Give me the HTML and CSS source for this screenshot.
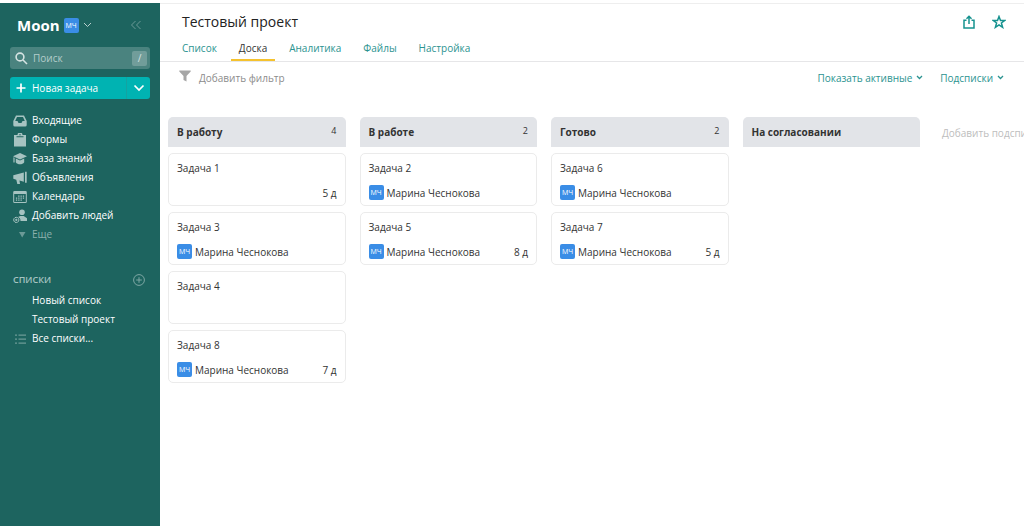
FILE: index.html
```html
<!DOCTYPE html>
<html lang="ru">
<head>
<meta charset="utf-8">
<title>Тестовый проект</title>
<link rel="stylesheet" href="styles.css">
</head>
<body>
<div class="app">
  <aside class="sidebar">
    <div class="account">
      <button class="workspace" type="button">
        <span class="workspace-name">Moon</span>
        <span class="avatar">МЧ</span>
        <svg class="chevron" width="9" height="6" viewBox="0 0 9 6"><path d="M1 1l3.500 3.500L8 1"/></svg>
      </button>
      <button class="collapse" type="button" aria-label="Свернуть">
        <svg width="12" height="10" viewBox="0 0 12 10"><path d="M5.500 1l-4 4 4 4M10.500 1l-4 4 4 4"/></svg>
      </button>
    </div>
    <div class="search">
      <svg width="13" height="13" viewBox="0 0 13 13"><circle cx="5" cy="5" r="3.900"/><path d="M8 8l4 4"/></svg>
      <input class="search-input" type="text" placeholder="Поиск" aria-label="Поиск">
      <span class="key">/</span>
    </div>
    <div class="create">
      <button class="create-main" type="button">
        <svg width="10" height="10" viewBox="0 0 10 10"><path d="M5 .5v9M.5 5h9"/></svg>
        Новая задача
      </button>
      <button class="create-more" type="button" aria-label="Другие варианты">
        <svg width="12" height="8" viewBox="0 0 12 8"><path d="M1.500 1.500L6 6l4.500-4.500"/></svg>
      </button>
    </div>
    <nav class="nav">
      <a class="nav-item" href="#"><svg class="icon" viewBox="0 0 14 14"><path fill-rule="evenodd" d="M3 1.500h8l2.700 5.500V11a1.500 1.500 0 0 1-1.500 1.500H1.800A1.500 1.500 0 0 1 .3 11V7zM4 3L2.200 7h2.300l1 2h3l1-2h2.300L10 3z"/></svg>Входящие</a>
      <a class="nav-item" href="#"><svg class="icon" viewBox="0 0 14 14"><path fill-rule="evenodd" d="M1 2h3.500a2.500 2.500 0 0 1 5 0H13v11.500H1zM3.500 3.200v1h7v-1zM6.300 1.800a.7.700 0 1 0 1.400 0 .7.700 0 0 0-1.400 0z"/></svg>Формы</a>
      <a class="nav-item" href="#"><svg class="icon" viewBox="0 0 14 14"><path d="M7 1l7 3.200-7 3.200-7-3.200zM2.800 6.400L7 8.400l4.200-2v3.800C9.500 13 4.500 13 2.800 10.200zM.4 5.200l1.200.5v4.800H.4z"/></svg>База знаний</a>
      <a class="nav-item" href="#"><svg class="icon" viewBox="0 0 14 14"><path d="M.3 4.300L10.800 1.500v9.200L6.500 9.600 7 13H4.300L3.300 8.700l-3-.9zM12 .8h1.700v11H12z"/></svg>Объявления</a>
      <a class="nav-item" href="#"><svg class="icon" viewBox="0 0 14 14"><path fill-rule="evenodd" d="M1.500 1h11A1.300 1.300 0 0 1 13.800 2.300v9.400a1.300 1.300 0 0 1-1.300 1.300h-11A1.300 1.300 0 0 1 .2 11.700V2.300A1.300 1.300 0 0 1 1.500 1zM1.200 4v8h11.600V4z"/><path d="M5.200 5.500h1.300v1.200H5.200zM7.500 5.500h1.300v1.200H7.500zM9.800 5.500h1.300v1.200H9.800zM2.900 7.500h1.300v1.200H2.900zM5.200 7.500h1.300v1.200H5.200zM7.500 7.500h1.300v1.200H7.500zM9.800 7.500h1.300v1.200H9.800zM2.900 9.500h1.300v1.200H2.900zM5.200 9.500h1.300v1.200H5.200zM7.500 9.500h1.300v1.200H7.500z"/></svg>Календарь</a>
      <a class="nav-item" href="#"><svg class="icon" viewBox="0 0 14 14"><circle cx="9" cy="3.300" r="2.800"/><path d="M7.300 7h3.400l3.300 2.300V12H7.500A4 4 0 0 0 5 8z"/><path class="ring" d="M3.300 8.300a2.600 2.600 0 1 0 .01 0zM3.300 9.700v2.400M2.100 10.900h2.400"/></svg>Добавить людей</a>
      <a class="nav-item nav-more" href="#"><svg class="icon" viewBox="0 0 14 14"><path d="M6 4h6.500L9.200 9.500z"/></svg>Еще</a>
    </nav>
    <div class="lists-head">
      <span>СПИСКИ</span>
      <button class="add-list" type="button" aria-label="Добавить список">
        <svg width="12" height="12" viewBox="0 0 12 12"><circle cx="6" cy="6" r="5.400"/><path d="M6 3.200v5.600M3.200 6h5.600"/></svg>
      </button>
    </div>
    <nav class="lists">
      <a class="nav-item" href="#"><span class="icon"></span>Новый список</a>
      <a class="nav-item" href="#"><span class="icon"></span>Тестовый проект</a>
      <a class="nav-item" href="#"><svg class="icon icon-dim" viewBox="0 0 14 14"><path d="M2 2.500h2v1.200H2zM2 6.500h2v1.200H2zM2 10.500h2v1.200H2zM5.500 2.500H13v1.200H5.500zM5.500 6.500H13v1.200H5.500zM5.500 10.500H13v1.200H5.500z"/></svg>Все списки...</a>
    </nav>
  </aside>
  <main class="main">
    <header class="header">
      <div class="title-row">
        <h1 class="title">Тестовый проект</h1>
        <div class="actions">
          <button type="button" aria-label="Поделиться"><svg width="12" height="14" viewBox="0 0 12 14"><path d="M3.500 5.200H1v7.800h10V5.200H8.500M6 9V1.500M3.500 3.800L6 1.300l2.500 2.500"/></svg></button>
          <button type="button" aria-label="В избранное"><svg width="14" height="14" viewBox="0 0 14 14"><path d="M7 1.500l1.500 4h4.200L9.400 8l1.200 4.300L7 9.800l-3.600 2.500L4.600 8 1.300 5.500h4.200z"/></svg></button>
        </div>
      </div>
      <nav class="tabs">
        <a class="tab" href="#">Список</a>
        <a class="tab tab-active" href="#">Доска</a>
        <a class="tab" href="#">Аналитика</a>
        <a class="tab" href="#">Файлы</a>
        <a class="tab" href="#">Настройка</a>
      </nav>
    </header>
    <div class="toolbar">
      <button class="filter" type="button">
        <svg width="12" height="15" viewBox="0 0 12 15"><path d="M.3.500h11.400v1L7.500 6v5.500L4.500 10V6L.3 1.500z"/></svg>
        Добавить фильтр
      </button>
      <div class="views">
        <button class="view" type="button">Показать активные <svg width="7" height="5" viewBox="0 0 7 5"><path d="M1 1l2.500 2.500L6 1"/></svg></button>
        <button class="view" type="button">Подсписки <svg width="7" height="5" viewBox="0 0 7 5"><path d="M1 1l2.500 2.500L6 1"/></svg></button>
      </div>
    </div>
    <div class="board">
      <section class="column">
        <h2 class="column-head">В работу <span class="count">4</span></h2>
        <article class="card"><div>Задача 1</div><div class="meta"><span class="days">5 д</span></div></article>
        <article class="card"><div>Задача 3</div><div class="meta"><span class="avatar">МЧ</span>Марина Чеснокова</div></article>
        <article class="card"><div>Задача 4</div><div class="meta"></div></article>
        <article class="card"><div>Задача 8</div><div class="meta"><span class="avatar">МЧ</span>Марина Чеснокова<span class="days">7 д</span></div></article>
      </section>
      <section class="column">
        <h2 class="column-head">В работе <span class="count">2</span></h2>
        <article class="card"><div>Задача 2</div><div class="meta"><span class="avatar">МЧ</span>Марина Чеснокова</div></article>
        <article class="card"><div>Задача 5</div><div class="meta"><span class="avatar">МЧ</span>Марина Чеснокова<span class="days">8 д</span></div></article>
      </section>
      <section class="column">
        <h2 class="column-head">Готово <span class="count">2</span></h2>
        <article class="card"><div>Задача 6</div><div class="meta"><span class="avatar">МЧ</span>Марина Чеснокова</div></article>
        <article class="card"><div>Задача 7</div><div class="meta"><span class="avatar">МЧ</span>Марина Чеснокова<span class="days">5 д</span></div></article>
      </section>
      <section class="column">
        <h2 class="column-head">На согласовании</h2>
      </section>
      <button class="add-column" type="button">Добавить подсписок</button>
    </div>
  </main>
</div>
</body>
</html>
```
FILE: styles.css
```css
* { box-sizing: border-box; }
body {
  margin: 0;
  font: 10px/16px "Open Sans", "Noto Sans", sans-serif;
  color: #333;
  background: #fff;
}
button, input {
  font: inherit;
  color: inherit;
  background: none;
  border: 0;
  padding: 0;
  margin: 0;
}
button { cursor: pointer; }
a { color: inherit; text-decoration: none; }
svg { display: block; flex: none; fill: none; stroke: currentColor; }

.app {
  display: flex;
  min-height: 100vh;
  padding-top: 3px;
}
.sidebar {
  flex: 0 0 160px;
  min-width: 0;
  padding: 12px 10px;
  background: #1d645f;
  color: #fff;
}
.account {
  display: flex;
  align-items: center;
  justify-content: space-between;
  height: 20px;
  padding: 0 8px 0 7px;
}
.workspace { display: flex; align-items: center; gap: 4px; }
.workspace-name { font-size: 15px; font-weight: 700; line-height: 20px; }
.chevron { color: #b9d0ce; }
.collapse { color: #6c9a97; }
.avatar {
  flex: none;
  width: 15px;
  height: 15px;
  border-radius: 2px;
  background: #3a8de6;
  color: #fff;
  font-size: 7px;
  font-weight: 500;
  line-height: 15px;
  text-align: center;
}
.search {
  display: flex;
  align-items: center;
  gap: 5px;
  height: 22px;
  margin-top: 12px;
  padding: 0 3px 0 5px;
  border-radius: 3px;
  background: #4a837f;
  color: #d5e3e2;
}
.search svg { stroke-width: 1.6; }
.search-input { flex: 1; width: 100%; min-width: 0; outline: 0; }
.search-input::placeholder { color: #b4cdcb; opacity: 1; }
.key {
  flex: none;
  width: 15px;
  height: 15px;
  border-radius: 2px;
  background: #719d9a;
  line-height: 15px;
  text-align: center;
}
.create {
  display: flex;
  height: 22px;
  margin-top: 8px;
  border-radius: 3px;
  background: #00b3b2;
  font-weight: 500;
}
.create-main { flex: 1; display: flex; align-items: center; gap: 6px; padding-left: 6px; }
.create-more { width: 24px; display: grid; place-items: center; border-left: 1px solid #14a3a1; }
.create svg { stroke-width: 1.7; }

.nav { margin-top: 12px; }
.nav-item {
  display: flex;
  align-items: center;
  gap: 5px;
  padding-left: 3px;
  line-height: 19px;
  font-weight: 500;
}
.icon { width: 14px; height: 14px; fill: #a6c3c1; stroke: none; }
.icon-dim { fill: #6c9a97; }
.ring { fill: none; stroke: #a6c3c1; }
.nav-more { color: #8bb0ad; font-weight: 400; }
.nav-more .icon { fill: #6c9a97; }
.lists-head {
  display: flex;
  align-items: center;
  justify-content: space-between;
  margin-top: 26px;
  padding: 0 5px 0 3px;
  line-height: 19px;
  font-size: 9px;
  font-weight: 600;
  color: #a6c3c1;
}
.add-list { color: #7ea7a4; }
.lists { margin-top: 2px; }

.main { flex: 1; min-width: 0; overflow: hidden; border-top: 1px solid #eee; }
.header { padding: 8px 18px 0 14px; border-bottom: 1px solid #e6e6e8; }
.title-row { display: flex; align-items: center; justify-content: space-between; padding-left: 8px; }
.title { margin: 0; font-size: 14px; line-height: 20px; font-weight: 400; color: #222; }
.actions { display: flex; align-items: center; gap: 17px; color: #16928f; }
.actions svg { stroke-width: 1.5; }
.tabs { display: flex; margin-top: 6px; }
.tab {
  padding: 2px 8px 3px;
  margin-right: 6px;
  border-bottom: 2px solid transparent;
  color: #2b9390;
}
.tab-active { border-color: #f5c22e; color: #333; }
.toolbar {
  display: flex;
  align-items: center;
  justify-content: space-between;
  height: 31px;
  padding: 0 20px 0 19px;
}
.filter { display: flex; align-items: center; gap: 8px; color: #8c8c8c; }
.filter svg { fill: #a6a6a6; stroke: none; }
.views { display: flex; gap: 17px; }
.view { display: flex; align-items: center; gap: 4px; color: #2b9390; }
.view svg { stroke-width: 1.3; }

.board {
  display: grid;
  grid-template-columns: repeat(4, minmax(0, 1fr)) 90px;
  gap: 14px;
  margin-top: 24px;
  padding-left: 8px;
}
.column { display: flex; flex-direction: column; gap: 6px; }
.column-head {
  display: flex;
  justify-content: space-between;
  margin: 0;
  padding: 0 9px;
  border-radius: 5px 5px 0 0;
  background: #e2e4e8;
  font-size: 10px;
  line-height: 30px;
  font-weight: 700;
}
.count { font-size: 9px; line-height: 28px; font-weight: 500; }
.card {
  padding: 6px 8px 5px;
  border: 1px solid #ebebeb;
  border-radius: 5px;
}
.meta { display: flex; align-items: center; gap: 3px; height: 15px; margin-top: 9px; }
.days { margin-left: auto; }
.add-column {
  padding-left: 8px;
  line-height: 32px;
  align-self: start;
  text-align: left;
  white-space: nowrap;
  color: #bdbdbd;
}
```
